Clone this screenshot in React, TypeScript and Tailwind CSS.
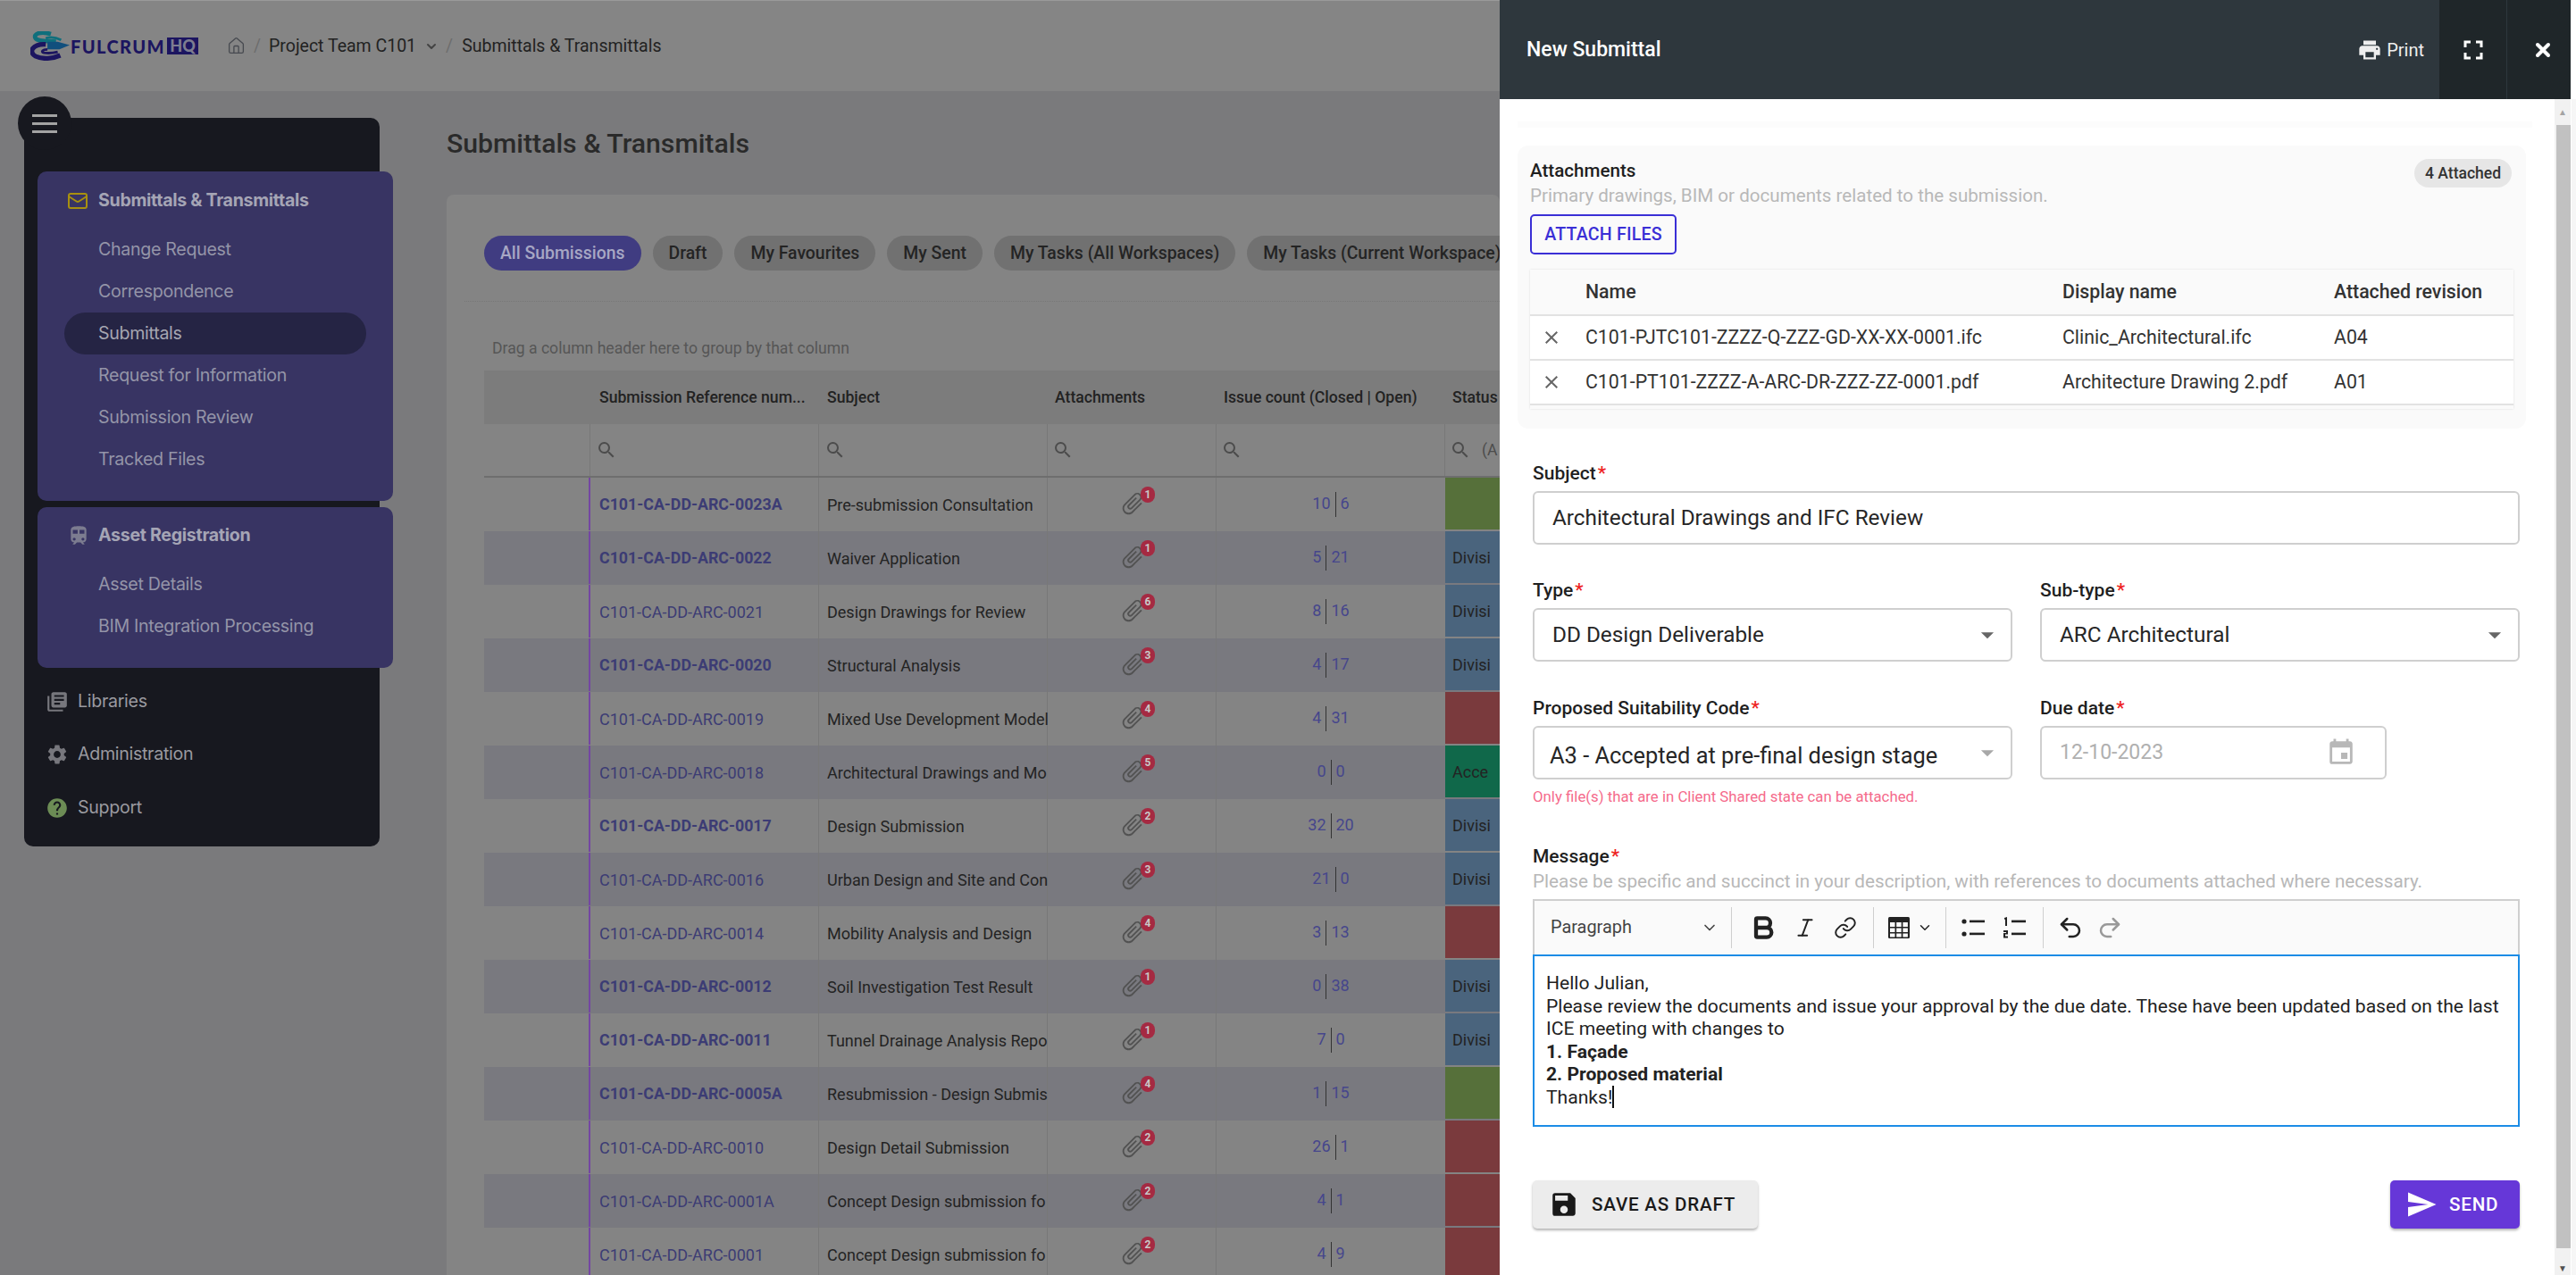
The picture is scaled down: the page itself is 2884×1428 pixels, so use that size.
import { Bold, ChevronDown, Home, Italic, Link, Mail, Undo2, Redo2, X } from 'lucide-react'
import {
  MdArrowDropDown,
  MdAttachFile,
  MdClose,
  MdEvent,
  MdFullscreen,
  MdHelp,
  MdLibraryBooks,
  MdPrint,
  MdSave,
  MdSearch,
  MdSend,
  MdSettings,
  MdTrain,
} from 'react-icons/md'

type Status = 'green' | 'blue' | 'red' | 'teal'

interface Row {
  ref: string
  subject: string
  files: number
  closed: number
  open: number
  status: Status
  unread?: boolean
}

const rows: Row[] = [
  { ref: 'C101-CA-DD-ARC-0023A', subject: 'Pre-submission Consultation', files: 1, closed: 10, open: 6, status: 'green', unread: true },
  { ref: 'C101-CA-DD-ARC-0022', subject: 'Waiver Application', files: 1, closed: 5, open: 21, status: 'blue', unread: true },
  { ref: 'C101-CA-DD-ARC-0021', subject: 'Design Drawings for Review', files: 6, closed: 8, open: 16, status: 'blue' },
  { ref: 'C101-CA-DD-ARC-0020', subject: 'Structural Analysis', files: 3, closed: 4, open: 17, status: 'blue', unread: true },
  { ref: 'C101-CA-DD-ARC-0019', subject: 'Mixed Use Development Model', files: 4, closed: 4, open: 31, status: 'red' },
  { ref: 'C101-CA-DD-ARC-0018', subject: 'Architectural Drawings and Mo', files: 5, closed: 0, open: 0, status: 'teal' },
  { ref: 'C101-CA-DD-ARC-0017', subject: 'Design Submission', files: 2, closed: 32, open: 20, status: 'blue', unread: true },
  { ref: 'C101-CA-DD-ARC-0016', subject: 'Urban Design and Site and Con', files: 3, closed: 21, open: 0, status: 'blue' },
  { ref: 'C101-CA-DD-ARC-0014', subject: 'Mobility Analysis and Design', files: 4, closed: 3, open: 13, status: 'red' },
  { ref: 'C101-CA-DD-ARC-0012', subject: 'Soil Investigation Test Result', files: 1, closed: 0, open: 38, status: 'blue', unread: true },
  { ref: 'C101-CA-DD-ARC-0011', subject: 'Tunnel Drainage Analysis Repo', files: 1, closed: 7, open: 0, status: 'blue', unread: true },
  { ref: 'C101-CA-DD-ARC-0005A', subject: 'Resubmission - Design Submis', files: 4, closed: 1, open: 15, status: 'green', unread: true },
  { ref: 'C101-CA-DD-ARC-0010', subject: 'Design Detail Submission', files: 2, closed: 26, open: 1, status: 'red' },
  { ref: 'C101-CA-DD-ARC-0001A', subject: 'Concept Design submission fo', files: 2, closed: 4, open: 1, status: 'red' },
  { ref: 'C101-CA-DD-ARC-0001', subject: 'Concept Design submission fo', files: 2, closed: 4, open: 9, status: 'red' },
]

const statusClass: Record<Status, string> = {
  green: 'bg-[#56703a]',
  blue: 'bg-[#4a647d]',
  red: 'bg-[#7a3a3d]',
  teal: 'bg-[#10684a]',
}

const statusLabel: Record<Status, string> = {
  green: '',
  blue: 'Divisi',
  red: '',
  teal: 'Acce',
}

const chips = ['Draft', 'My Favourites', 'My Sent', 'My Tasks (All Workspaces)', 'My Tasks (Current Workspace)']

const columns = 'grid grid-cols-[119px_256px_256px_189px_256px_1fr]'

function Logo() {
  return (
    <div className="flex items-center ml-[34px] w-[196px] h-[34px] shrink-0">
      <svg viewBox="0 0 46 34" className="w-[44px] h-[33px] shrink-0" fill="none">
        <path d="M24 3 C12 -1 3 3 6 8 C9 12 20 11 30 12" stroke="#0f6f7c" strokeWidth="5" />
        <path d="M18 8 C24 6 30 7 36 10" stroke="#0f6f7c" strokeWidth="3" />
        <path d="M20 12 H32 L46 16 L34 21 H20 Z" fill="#114f7d" stroke="none" />
        <path d="M18 15 C3 14 -3 24 6 29 C14 33 26 32 35 28" stroke="#1c1560" strokeWidth="5.5" />
        <path d="M20 21 C14 21 12 24 16 25 C22 26 28 25 32 24" stroke="#1c1560" strokeWidth="3" />
      </svg>
      <span className="ml-[1px] font-['Lato',sans-serif] font-black text-[20px] leading-none tracking-[1.4px] text-[#1c1560]">FULCRUM</span>
      <span className="ml-[2px] w-[35px] h-[19px] bg-[#1c1560] text-[#7d7d90] font-['Lato',sans-serif] font-black text-[18px] leading-[19px] text-center">HQ</span>
    </div>
  )
}

function SubItem({ label, active }: { label: string; active?: boolean }) {
  return (
    <div className={`h-[47px] ml-[30px] w-[338px] pl-[38px] flex items-center text-[19.6px] tracking-[-0.3px] ${active ? 'bg-[#252444] rounded-full text-[#a6a6b2]' : 'text-[#9494a8]'}`}>
      {label}
    </div>
  )
}

function Sidebar() {
  return (
    <aside className="relative w-[398px] h-[816px] ml-[27px] mt-[30px] bg-[#17181f] rounded-[10px] font-['Inter',sans-serif] shrink-0">
      <div className="absolute left-[-7px] top-[-24px] w-[60px] h-[60px] rounded-full bg-[#17181f] flex flex-col items-center justify-center gap-[6px]">
        <span className="w-[28px] h-[3px] bg-[#a3a3a3]" />
        <span className="w-[28px] h-[3px] bg-[#a3a3a3]" />
        <span className="w-[28px] h-[3px] bg-[#a3a3a3]" />
      </div>
      <div className="flex flex-col gap-[7px] pt-[60px] w-[398px] ml-[15px]">
        <div className="h-[369px] bg-[#383463] rounded-[10px] pt-[11px]">
          <div className="h-[44px] flex items-center pl-[33px] gap-[11px] font-bold text-[19.6px] tracking-[-0.3px] text-[#a5a5b5]">
            <Mail size={24} className="text-[#a8900f]" />
            Submittals &amp; Transmittals
          </div>
          <div className="mt-[9px]">
            <SubItem label="Change Request" />
            <SubItem label="Correspondence" />
            <SubItem label="Submittals" active />
            <SubItem label="Request for Information" />
            <SubItem label="Submission Review" />
            <SubItem label="Tracked Files" />
          </div>
        </div>
        <div className="h-[180px] bg-[#383463] rounded-[10px] pt-[10px]">
          <div className="h-[44px] flex items-center pl-[33px] gap-[9px] font-bold text-[19.6px] tracking-[-0.3px] text-[#a5a5b5]">
            <MdTrain size={26} className="text-[#7c7c90]" />
            Asset Registration
          </div>
          <div className="mt-[9px]">
            <SubItem label="Asset Details" />
            <SubItem label="BIM Integration Processing" />
          </div>
        </div>
      </div>
      <div className="flex flex-col pl-[24px] pt-[8px] text-[19.6px] tracking-[-0.3px] text-[#9a9aa0]">
        <div className="h-[59px] flex items-center gap-[10px]">
          <MdLibraryBooks size={26} className="text-[#77777d]" />
          Libraries
        </div>
        <div className="h-[60px] flex items-center gap-[10px]">
          <MdSettings size={26} className="text-[#77777d]" />
          Administration
        </div>
        <div className="h-[59px] flex items-center gap-[10px]">
          <MdHelp size={26} className="text-[#6c8c55]" />
          Support
        </div>
      </div>
    </aside>
  )
}

function SubmissionRow({ row, index }: { row: Row; index: number }) {
  return (
    <div className={`${columns} h-[60px] text-[18px] ${index % 2 === 1 ? 'bg-[#79797f]' : ''}`}>
      <div className="border-r-2 border-[#7446a2] mb-[1px]" />
      <div className={`flex items-center pl-[10px] border-r border-[#787878] text-[#3c3c74] whitespace-nowrap ${row.unread ? 'font-bold text-[17.8px]' : ''}`}>
        {row.ref}
      </div>
      <div className="flex items-center pl-[9px] border-r border-[#787878] text-[#232323] whitespace-nowrap">
        {row.subject}
      </div>
      <div className="relative flex items-center border-r border-[#787878]">
        <MdAttachFile size={30} className="ml-[80px] mt-[-2px] rotate-45 text-[#525252]" />
        <span className="absolute left-[104px] top-[10px] w-[16px] h-[18px] rounded-full bg-[#a52a42] text-[12px] leading-[18px] font-bold text-center text-[#c8c8c8]">
          {row.files}
        </span>
      </div>
      <div className="flex items-center justify-center text-[#46468c]">
        <span className="pr-[5px] -mt-[4px]">{row.closed}</span>
        <span className="h-[28px] border-l border-[#333]" />
        <span className="pl-[5px] -mt-[4px]">{row.open}</span>
      </div>
      <div className={`${statusClass[row.status]} mb-[2px] flex items-center pl-[8px] text-[#232323] whitespace-nowrap`}>
        {statusLabel[row.status]}
      </div>
    </div>
  )
}

function SubmissionsPage() {
  return (
    <div className="relative w-[1679px] h-[1428px] overflow-hidden bg-[#7a7a7c] shrink-0 font-['Roboto',sans-serif]">
      <header className="h-[102px] bg-[#858585] flex items-center gap-[24px] text-[19.5px] text-[#222] border-t border-[#9a9a9a]">
        <Logo />
        <div className="flex items-center gap-[9px]">
          <Home size={21} strokeWidth={1.5} className="text-[#474a50]" />
          <span className="text-[#6d6d6d]">/</span>
          <span>Project Team C101</span>
          <ChevronDown size={16} strokeWidth={3} className="text-[#444]" />
          <span className="ml-[-1px] text-[#6d6d6d]">/</span>
          <span className="ml-[1px]">Submittals &amp; Transmittals</span>
        </div>
      </header>
      <div className="flex">
        <Sidebar />
        <main className="ml-[75px] flex-1 min-w-0">
          <h1 className="mt-[40px] h-[38px] text-[30.2px] leading-[38px] font-medium text-[#2a2a2a] whitespace-nowrap">Submittals &amp; Transmitals</h1>
          <section className="mt-[38px] bg-[#848484] rounded-t-[8px] h-[1210px] pl-[42px] pt-[46px] overflow-hidden">
            <div className="flex gap-[13px] text-[19.4px] font-medium">
              <span className="h-[39px] px-[18px] flex items-center rounded-full bg-[#403c81] text-[#a7a7c4] whitespace-nowrap">All Submissions</span>
              {chips.map((chip) => (
                <span key={chip} className="h-[39px] px-[18px] flex items-center rounded-full bg-[#717171] text-[#242424] whitespace-nowrap">
                  {chip}
                </span>
              ))}
            </div>
            <div className="-ml-[22px] mt-[34px] border-t border-dotted border-[#777]" />
            <div className="h-[77px] pl-[9px] pt-[40px] text-[17.6px] leading-[24px] text-[#565656]">Drag a column header here to group by that column</div>
            <div className={`${columns} h-[60px] bg-[#7c7c7c] text-[17.6px] font-medium text-[#222]`}>
              <div />
              <div className="flex items-center pl-[10px]">Submission Reference num...</div>
              <div className="flex items-center pl-[9px]">Subject</div>
              <div className="flex items-center pl-[8px]">Attachments</div>
              <div className="flex items-center pl-[8px] whitespace-nowrap">Issue count (Closed | Open)</div>
              <div className="flex items-center pl-[8px]">Status</div>
            </div>
            <div className={`${columns} h-[60px] border-b-2 border-[#6e6e6e] text-[#4c4c4c]`}>
              <div className="border-r border-[#787878]" />
              <div className="flex items-center pl-[6px] border-r border-[#787878]"><MdSearch size={24} /></div>
              <div className="flex items-center pl-[6px] border-r border-[#787878]"><MdSearch size={24} /></div>
              <div className="flex items-center pl-[5px] border-r border-[#787878]"><MdSearch size={24} /></div>
              <div className="flex items-center pl-[5px] border-r border-[#787878]"><MdSearch size={24} /></div>
              <div className="flex items-center gap-[12px] pl-[5px] text-[17.6px] whitespace-nowrap"><MdSearch size={24} />(A</div>
            </div>
            {rows.map((row, index) => (
              <SubmissionRow key={row.ref} row={row} index={index} />
            ))}
          </section>
        </main>
      </div>
    </div>
  )
}

function FieldLabel({ label }: { label: string }) {
  return (
    <div className="h-[26px] leading-[26px] text-[21px] font-medium text-[#1f1f1f]">
      {label}
      <span className="ml-[2px] text-[#ee2222]">*</span>
    </div>
  )
}

function SelectBox({ value, muted }: { value: string; muted?: boolean }) {
  return (
    <div className="h-[60px] mt-[7px] pl-[20px] pr-[9px] flex items-center justify-between border-2 border-[#cfcfcf] rounded-[6px] text-[24.3px] text-[#262626] whitespace-nowrap">
      <span className={muted ? '-ml-[3px] mt-[6px] text-[25.4px]' : 'mt-[1px]'}>{value}</span>
      <MdArrowDropDown size={34} className={muted ? 'text-[#a8a8a8]' : 'text-[#666]'} />
    </div>
  )
}

function AttachmentRow({ name, display, revision }: { name: string; display: string; revision: string }) {
  return (
    <div className="grid grid-cols-[62px_534px_304px_1fr] h-[50px] items-center bg-white border-b-2 border-[#e2e2e2] text-[21.3px] text-[#333]">
      <MdClose size={24} className="ml-[12px] text-[#666]" />
      <div>{name}</div>
      <div>{display}</div>
      <div>{revision}</div>
    </div>
  )
}

function TableGlyph() {
  return (
    <svg viewBox="0 0 26 26" className="w-[26px] h-[26px]">
      <rect x="1" y="1" width="24" height="24" rx="1.5" fill="#222" />
      <g fill="#fafafa">
        <rect x="3" y="7" width="5.5" height="5" />
        <rect x="10.2" y="7" width="5.5" height="5" />
        <rect x="17.4" y="7" width="5.5" height="5" />
        <rect x="3" y="13.5" width="5.5" height="4.5" />
        <rect x="10.2" y="13.5" width="5.5" height="4.5" />
        <rect x="17.4" y="13.5" width="5.5" height="4.5" />
        <rect x="3" y="19.5" width="5.5" height="4" />
        <rect x="10.2" y="19.5" width="5.5" height="4" />
        <rect x="17.4" y="19.5" width="5.5" height="4" />
      </g>
    </svg>
  )
}

function BulletGlyph() {
  return (
    <svg viewBox="0 0 28 26" className="w-[28px] h-[26px]" fill="#222">
      <circle cx="3" cy="6" r="2.6" />
      <circle cx="3" cy="20" r="2.6" />
      <rect x="9" y="4.6" width="17" height="2.6" />
      <rect x="9" y="18.6" width="17" height="2.6" />
    </svg>
  )
}

function NumberedGlyph() {
  return (
    <svg viewBox="0 0 28 26" className="w-[28px] h-[26px]" fill="#222">
      <path d="M2 2 L5 1 V11 H3 V3.5 L2 4 Z" />
      <path d="M1 16 H6 V20.5 H3 V22.5 H6 V24.5 H1 V19 H4 V18 H1 Z" />
      <rect x="10" y="4.6" width="16" height="2.6" />
      <rect x="10" y="18.6" width="16" height="2.6" />
    </svg>
  )
}

function Drawer() {
  return (
    <div className="w-[1205px] h-[1428px] bg-white flex flex-col overflow-hidden shrink-0 font-['Roboto',sans-serif]">
      <div className="w-[1199px] h-[111px] bg-[#2e373d] flex items-stretch text-white shrink-0">
        <div className="flex-1 flex items-center pl-[30px] pt-[2px] text-[23px] font-medium">New Submittal</div>
        <div className="flex items-center gap-[5px] pr-[17px] text-[20px] text-[#eee]">
          <MdPrint size={28} />
          Print
        </div>
        <div className="w-[76px] bg-[#1f2629] flex items-center justify-center border-r border-[#2e373d]">
          <MdFullscreen size={36} />
        </div>
        <div className="w-[71px] bg-[#1f2629] flex items-center justify-center pl-[9px]">
          <X size={24} strokeWidth={4} />
        </div>
      </div>
      <div className="flex flex-1 min-h-0">
        <div className="flex-1 min-w-0 pl-[20px] overflow-hidden">
          <div className="mt-[25px] h-[7px] mr-[25px] bg-[#fcfcfc]" />
          <div className="mt-[20px] mr-[32px] h-[317px] bg-[#fafafa] rounded-[12px] px-[14px] pt-[14px] relative">
            <div className="text-[20.6px] leading-[28px] font-medium text-[#1f1f1f]">Attachments</div>
            <div className="text-[20.6px] leading-[28px] text-[#b8b8b8]">Primary drawings, BIM or documents related to the submission.</div>
            <span className="absolute right-[16px] top-[15px] h-[32px] px-[12px] flex items-center rounded-full bg-[#e6e6e6] text-[17.5px] font-medium text-[#333]">
              4 Attached
            </span>
            <button className="mt-[7px] w-[164px] h-[45px] border-2 border-[#3a2fd6] rounded-[5px] text-[19.6px] font-medium tracking-[0.2px] text-[#3a2fd6]">
              ATTACH FILES
            </button>
            <div className="mt-[17px] h-[156px] overflow-hidden shadow-[0_0_2px_rgba(0,0,0,0.12)]">
              <div className="grid grid-cols-[62px_534px_304px_1fr] h-[52px] items-center border-b-2 border-[#e2e2e2] text-[21.3px] font-medium text-[#333]">
                <div />
                <div>Name</div>
                <div>Display name</div>
                <div className="whitespace-nowrap">Attached revision</div>
              </div>
              <AttachmentRow name="C101-PJTC101-ZZZZ-Q-ZZZ-GD-XX-XX-0001.ifc" display="Clinic_Architectural.ifc" revision="A04" />
              <AttachmentRow name="C101-PT101-ZZZZ-A-ARC-DR-ZZZ-ZZ-0001.pdf" display="Architecture Drawing 2.pdf" revision="A01" />
            </div>
          </div>
          <div className="w-[1105px] ml-[17px] mt-[37px]">
            <FieldLabel label="Subject" />
            <div className="h-[60px] mt-[7px] px-[20px] flex items-center border-2 border-[#cfcfcf] rounded-[6px] text-[24.3px] text-[#262626]">
              <span className="mt-[1px]">Architectural Drawings and IFC Review</span>
            </div>
            <div className="grid grid-cols-[537px_537px] gap-x-[31px] mt-[38px]">
              <div>
                <FieldLabel label="Type" />
                <SelectBox value="DD Design Deliverable" />
              </div>
              <div>
                <FieldLabel label="Sub-type" />
                <SelectBox value="ARC Architectural" />
              </div>
            </div>
            <div className="grid grid-cols-[537px_388px] gap-x-[31px] mt-[39px]">
              <div>
                <FieldLabel label="Proposed Suitability Code" />
                <SelectBox value="A3 - Accepted at pre-final design stage" muted />
                <div className="mt-[9px] text-[16.8px] leading-[20px] text-[#f56a8b]">Only file(s) that are in Client Shared state can be attached.</div>
              </div>
              <div>
                <FieldLabel label="Due date" />
                <div className="h-[60px] mt-[7px] pl-[20px] pr-[32px] flex items-center justify-between border-2 border-[#cfcfcf] rounded-[6px] text-[23px] text-[#b0b0b0]">
                  12-10-2023
                  <MdEvent size={34} className="text-[#b8b8b8]" />
                </div>
              </div>
            </div>
            <div className="mt-[44px]">
              <FieldLabel label="Message" />
              <div className="mt-[3px] h-[25px] leading-[25px] text-[20.7px] text-[#b8b8b8] whitespace-nowrap">Please be specific and succinct in your description, with references to documents attached where necessary.</div>
              <div className="mt-[7px] h-[62px] bg-[#fafafa] border-2 border-b-0 border-[#cfcfcf] flex items-center text-[#222]">
                <div className="w-[221px] h-[46px] pl-[18px] pr-[14px] flex items-center justify-between text-[19.9px] text-[#444] border-r border-[#cfcfcf]">
                  Paragraph
                  <ChevronDown size={20} strokeWidth={2} />
                </div>
                <div className="w-[159px] h-[46px] flex items-center justify-evenly border-r border-[#cfcfcf]">
                  <Bold size={32} strokeWidth={3.2} />
                  <Italic size={26} strokeWidth={1.8} />
                  <Link size={26} strokeWidth={1.8} />
                </div>
                <div className="w-[81px] h-[46px] flex items-center justify-center gap-[7px] border-r border-[#cfcfcf]">
                  <TableGlyph />
                  <ChevronDown size={18} strokeWidth={2} />
                </div>
                <div className="w-[109px] h-[46px] flex items-center justify-evenly border-r border-[#cfcfcf]">
                  <BulletGlyph />
                  <NumberedGlyph />
                </div>
                <div className="w-[104px] h-[46px] flex items-center justify-evenly">
                  <Undo2 size={30} strokeWidth={2} />
                  <Redo2 size={30} strokeWidth={2} className="text-[#999]" />
                </div>
              </div>
              <div className="h-[193px] border-2 border-[#1c8ce6] px-[13px] pt-[17px] text-[21.1px] leading-[25.6px] text-[#222]">
                <div>Hello Julian,</div>
                <div>Please review the documents and issue your approval by the due date. These have been updated based on the last ICE meeting with changes to</div>
                <div className="font-bold">1. Façade</div>
                <div className="font-bold">2. Proposed material</div>
                <div className="flex items-center">
                  Thanks!
                  <span className="w-[2px] h-[25px] bg-[#111]" />
                </div>
              </div>
            </div>
            <div className="flex justify-between mt-[60px]">
              <button className="w-[252px] h-[54px] bg-[#ececec] rounded-[5px] shadow-[0_2px_3px_rgba(0,0,0,0.3)] flex items-center gap-[14px] pl-[18px] text-[20.6px] font-medium tracking-[0.8px] text-[#1a1a1a]">
                <MdSave size={34} />
                SAVE AS DRAFT
              </button>
              <button className="w-[145px] h-[54px] bg-[#6637d8] rounded-[5px] shadow-[0_2px_3px_rgba(0,0,0,0.3)] flex items-center gap-[13px] pl-[17px] text-[20.6px] font-medium tracking-[0.8px] text-white">
                <MdSend size={36} />
                SEND
              </button>
            </div>
          </div>
        </div>
        <div className="w-[18px] bg-[#f1f1f1] flex flex-col shrink-0">
          <div className="h-[29px] flex items-center justify-center text-[10px] text-[#a3a3a3]">▲</div>
          <div className="flex-1 ml-[2px] bg-[#c1c1c1]" />
          <div className="h-[30px] flex items-end justify-center text-[10px] text-[#505050]">▼</div>
        </div>
        <div className="w-[6px] bg-[#f6f6f6] border-l border-white shrink-0" />
      </div>
    </div>
  )
}

export default function App() {
  return (
    <div className="flex w-[2884px] h-[1428px] overflow-hidden bg-white">
      <SubmissionsPage />
      <Drawer />
    </div>
  )
}
